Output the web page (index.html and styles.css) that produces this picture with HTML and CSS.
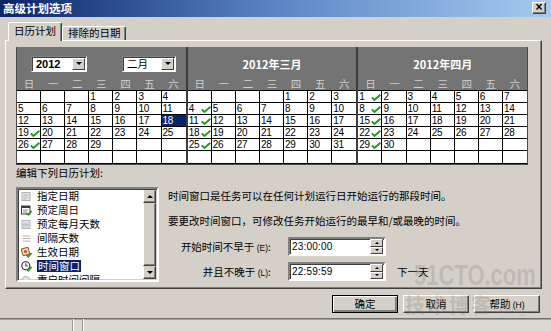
FILE: index.html
```html
<!DOCTYPE html>
<html lang="zh-CN">
<head>
<meta charset="utf-8">
<title>高级计划选项</title>
<link rel="stylesheet" href="styles.css">
</head>
<body>
<div class="window">
  <div class="titlebar">
    <span class="title">高级计划选项</span>
    <span class="close">×</span>
  </div>
  <div class="main">
    <div class="tabs">
      <div class="tab active">日历计划</div>
      <div class="tab">排除的日期</div>
    </div>
    <div class="panel">
      <div class="calendar">
        <div class="month">
          <div class="mhead">
            <div class="mtop first">
              <div class="select year"><span class="sv">2012</span><span class="dd"><i></i></span></div>
              <div class="select mon"><span class="sv">二月</span><span class="dd"><i></i></span></div>
            </div>
            <div class="wk"><span>日</span><span>一</span><span>二</span><span>三</span><span>四</span><span>五</span><span>六</span></div>
          </div>
          <div class="grid">
            <span></span><span></span><span></span><span>1</span><span>2</span><span>3</span><span>4</span>
            <span>5</span><span>6</span><span>7</span><span>8</span><span>9</span><span>10</span><span>11</span>
            <span>12</span><span>13</span><span>14</span><span>15</span><span>16</span><span>17</span><span class="sel">18</span>
            <span>19<svg class="ck" viewBox="0 0 10 7"><path d="M0.8 3.4 3.4 6 9.4 0.8"/></svg></span><span>20</span><span>21</span><span>22</span><span>23</span><span>24</span><span>25</span>
            <span>26<svg class="ck" viewBox="0 0 10 7"><path d="M0.8 3.4 3.4 6 9.4 0.8"/></svg></span><span>27</span><span>28</span><span>29</span><span></span><span></span><span></span>
            <span></span><span></span><span></span><span></span><span></span><span></span><span></span>
          </div>
        </div>
        <div class="month">
          <div class="mhead">
            <div class="mtop">2012年三月</div>
            <div class="wk"><span>日</span><span>一</span><span>二</span><span>三</span><span>四</span><span>五</span><span>六</span></div>
          </div>
          <div class="grid">
            <span></span><span></span><span></span><span></span><span>1</span><span>2</span><span>3</span>
            <span>4<svg class="ck" viewBox="0 0 10 7"><path d="M0.8 3.4 3.4 6 9.4 0.8"/></svg></span><span>5</span><span>6</span><span>7</span><span>8</span><span>9</span><span>10</span>
            <span>11<svg class="ck" viewBox="0 0 10 7"><path d="M0.8 3.4 3.4 6 9.4 0.8"/></svg></span><span>12</span><span>13</span><span>14</span><span>15</span><span>16</span><span>17</span>
            <span>18<svg class="ck" viewBox="0 0 10 7"><path d="M0.8 3.4 3.4 6 9.4 0.8"/></svg></span><span>19</span><span>20</span><span>21</span><span>22</span><span>23</span><span>24</span>
            <span>25<svg class="ck" viewBox="0 0 10 7"><path d="M0.8 3.4 3.4 6 9.4 0.8"/></svg></span><span>26</span><span>27</span><span>28</span><span>29</span><span>30</span><span>31</span>
            <span></span><span></span><span></span><span></span><span></span><span></span><span></span>
          </div>
        </div>
        <div class="month">
          <div class="mhead">
            <div class="mtop">2012年四月</div>
            <div class="wk"><span>日</span><span>一</span><span>二</span><span>三</span><span>四</span><span>五</span><span>六</span></div>
          </div>
          <div class="grid">
            <span>1<svg class="ck" viewBox="0 0 10 7"><path d="M0.8 3.4 3.4 6 9.4 0.8"/></svg></span><span>2</span><span>3</span><span>4</span><span>5</span><span>6</span><span>7</span>
            <span>8<svg class="ck" viewBox="0 0 10 7"><path d="M0.8 3.4 3.4 6 9.4 0.8"/></svg></span><span>9</span><span>10</span><span>11</span><span>12</span><span>13</span><span>14</span>
            <span>15<svg class="ck" viewBox="0 0 10 7"><path d="M0.8 3.4 3.4 6 9.4 0.8"/></svg></span><span>16</span><span>17</span><span>18</span><span>19</span><span>20</span><span>21</span>
            <span>22<svg class="ck" viewBox="0 0 10 7"><path d="M0.8 3.4 3.4 6 9.4 0.8"/></svg></span><span>23</span><span>24</span><span>25</span><span>26</span><span>27</span><span>28</span>
            <span>29<svg class="ck" viewBox="0 0 10 7"><path d="M0.8 3.4 3.4 6 9.4 0.8"/></svg></span><span>30</span><span></span><span></span><span></span><span></span><span></span>
            <span></span><span></span><span></span><span></span><span></span><span></span><span></span>
          </div>
        </div>
      </div>

      <div class="lower">
        <div class="left">
          <div class="label">编辑下列日历计划:</div>
          <div class="list">
            <div class="items">
              <div class="item">
                <svg class="ico" viewBox="0 0 11 11"><rect x="1" y="1.5" width="8" height="8" fill="#e6e4e0" stroke="#b4b2ae"/><path d="M2.5 4h5M2.5 6h5M2.5 8h3" stroke="#c0beba"/></svg>
                <span>指定日期</span>
              </div>
              <div class="item">
                <svg class="ico" viewBox="0 0 11 11"><rect x="0.5" y="1" width="8.5" height="8" fill="#fff" stroke="#3c3c3c"/><rect x="0.5" y="1" width="8.5" height="2" fill="#3c3c3c"/><path d="M2 5h5M2 7h4" stroke="#888"/><path d="M5.5 8 7.3 9.8 10.6 6" stroke="#1a9a1a" stroke-width="1.6" fill="none"/></svg>
                <span>预定周日</span>
              </div>
              <div class="item">
                <svg class="ico" viewBox="0 0 11 11"><rect x="1" y="1.5" width="8" height="8" fill="#e4e6ea" stroke="#aeb4bc"/><path d="M3 3.5v5M5 3.5v5M7 3.5v5M2 5.5h6" stroke="#b8c0c8"/></svg>
                <span>预定每月天数</span>
              </div>
              <div class="item">
                <svg class="ico" viewBox="0 0 11 11"><path d="M1.5 3h8M1.5 5.5h8M1.5 8h8" stroke="#b8b6b2" stroke-width="1.2"/></svg>
                <span>间隔天数</span>
              </div>
              <div class="item">
                <svg class="ico" viewBox="0 0 11 11"><rect x="1" y="1" width="7" height="7" rx="1" fill="#f4e2a0" stroke="#7a5a30" transform="rotate(-15 4.5 4.5)"/><circle cx="4.5" cy="4.5" r="1.6" fill="#d04a4a"/><path d="M5.5 8 7.3 9.8 10.6 6" stroke="#1a9a1a" stroke-width="1.6" fill="none"/></svg>
                <span>生效日期</span>
              </div>
              <div class="item">
                <svg class="ico" viewBox="0 0 11 11"><circle cx="4.8" cy="4.8" r="4" fill="#fff" stroke="#2a2a2a" stroke-width="1.1"/><path d="M4.8 2.3v2.6h2" stroke="#2a2a2a" fill="none"/><path d="M5.5 8 7.3 9.8 10.6 6" stroke="#1a9a1a" stroke-width="1.6" fill="none"/></svg>
                <span class="hl">时间窗口</span>
              </div>
              <div class="item">
                <svg class="ico" viewBox="0 0 11 11"><circle cx="5" cy="5" r="3.5" fill="#e8e6e2" stroke="#b0aeaa"/></svg>
                <span>重启时间间隔</span>
              </div>
            </div>
            <div class="scroll">
              <div class="sbtn"><i class="up"></i></div>
              <div class="thumb"></div>
              <div class="sbtn"><i class="down"></i></div>
            </div>
          </div>
        </div>
        <div class="right">
          <p class="line">时间窗口是任务可以在任何计划运行日开始运行的那段时间。</p>
          <p class="line two">要更改时间窗口，可修改任务开始运行的最早和/或最晚的时间。</p>
          <div class="row r1">
            <span class="flabel">开始时间不早于 <small>(E)</small>:</span>
            <div class="spin"><span class="val">23:00:00</span><span class="arrows"><span class="ab"><i class="up"></i></span><span class="ab"><i class="down"></i></span></span></div>
          </div>
          <div class="row r2">
            <span class="flabel">并且不晚于 <small>(L)</small>:</span>
            <div class="spin"><span class="val">22:59:59</span><span class="arrows"><span class="ab"><i class="up"></i></span><span class="ab"><i class="down"></i></span></span></div>
            <span class="next">下一天</span>
          </div>
        </div>
      </div>
    </div>
    <div class="buttons">
      <div class="btn default">确定</div>
      <div class="btn">取消</div>
      <div class="btn">帮助 <small>(H)</small></div>
    </div>
  </div>
  <div class="bottom">
    <span class="seg"></span><span class="seg"></span>
  </div>
  <div class="watermark">
    <div class="wm1">51CTO.com</div>
    <div class="wm2">技术博客 <span>Blog</span></div>
  </div>
</div>
</body>
</html>
```

FILE: styles.css
```css
* { box-sizing: border-box; }

body {
  margin: 0;
  background: #d4d0c8;
  font-family: "Noto Sans CJK SC", "Liberation Sans", sans-serif;
  font-size: 10.5px;
  color: #000;
}

.window {
  width: 551px;
  height: 331px;
  overflow: hidden;
  background: #d4d0c8;
  position: relative;
}

/* title bar */
.titlebar {
  height: 17px;
  display: flex;
  align-items: center;
  justify-content: space-between;
  padding: 0 5px 0 3px;
  background: linear-gradient(to right, #0a246a 0%, #5a86c4 50%, #a6caf0 100%);
}
.title {
  color: #fff;
  font-weight: bold;
  font-size: 11.5px;
  line-height: 17px;
}
.close {
  width: 14px;
  height: 12px;
  margin-top: -2px;
  background: #d4d0c8;
  border: 1px solid;
  border-color: #fff #404040 #404040 #fff;
  box-shadow: inset -1px -1px #808080;
  font-family: "Liberation Sans", sans-serif;
  font-weight: bold;
  font-size: 12px;
  line-height: 9px;
  text-align: center;
}

/* main area */
.main {
  height: 301px;
  padding: 5px 0 0 5px;
}

.tabs {
  display: flex;
  align-items: flex-end;
  height: 18px;
  padding-left: 3px;
}
.tab {
  height: 14px;
  padding: 0 4px 0 5px;
  border: 1px solid;
  border-color: #fff #404040 transparent #fff;
  border-bottom: none;
  border-radius: 2px 2px 0 0;
  box-shadow: inset -1px 0 #808080;
  line-height: 12px;
  white-space: nowrap;
}
.tab.active {
  height: 19px;
  margin-bottom: -1px;
  padding: 0 5px;
  line-height: 15px;
  background: #d4d0c8;
  position: relative;
  z-index: 1;
}

.panel {
  width: 537px;
  height: 249px;
  border: 1px solid;
  border-color: #fff #404040 #404040 #fff;
  box-shadow: inset -1px -1px #808080;
  padding: 6px 0 0 10px;
}

/* calendar */
.calendar {
  width: 512px;
  height: 118px;
  display: flex;
  gap: 2px;
  background: #3c3c3c;
  border: 1px solid #4a4a4a;
  border-top: none;
}
.month {
  flex: 1;
  display: flex;
  flex-direction: column;
}
.mhead {
  background: #747474;
  height: 43px;
}
.mtop {
  height: 31px;
  display: flex;
  align-items: center;
  justify-content: center;
  padding-top: 2px;
  color: #fff;
  font-weight: bold;
  font-size: 11px;
}
.mtop.first {
  justify-content: flex-start;
  padding-left: 14px;
  gap: 35px;
}
.select {
  height: 16px;
  background: #fff;
  border: 1px solid;
  border-color: #808080 #fff #fff #808080;
  box-shadow: inset 1px 1px #404040;
  display: flex;
  align-items: center;
  justify-content: space-between;
  padding: 1px 1px 1px 4px;
  color: #000;
}
.select.year { width: 56px; }
.select.mon { width: 54px; }
.select .sv {
  font-family: "Liberation Sans", "Noto Sans CJK SC", sans-serif;
  font-size: 11px;
  line-height: 12px;
}
.select.year .sv { font-weight: bold; }
.select.mon .sv { font-weight: normal; font-family: "Noto Sans CJK SC", sans-serif; font-size: 10.5px; }
.dd {
  width: 13px;
  height: 12px;
  background: #d4d0c8;
  border: 1px solid;
  border-color: #fff #404040 #404040 #fff;
  display: flex;
  align-items: center;
  justify-content: center;
}
.dd i, .down {
  display: block;
  width: 0;
  height: 0;
  border-left: 3px solid transparent;
  border-right: 3px solid transparent;
  border-top: 3px solid #000;
}
.up {
  display: block;
  width: 0;
  height: 0;
  border-left: 3px solid transparent;
  border-right: 3px solid transparent;
  border-bottom: 3px solid #000;
}

.wk {
  height: 12px;
  display: grid;
  grid-template-columns: repeat(7, 1fr);
  color: #d0d0d0;
  font-size: 10.5px;
  line-height: 11px;
  text-align: center;
}

.grid {
  flex: 1;
  display: grid;
  grid-template-columns: repeat(7, 1fr);
  grid-template-rows: repeat(5, 12px) 1fr;
  background: #fff;
  border-top: 1px solid #000;
}
.grid > span {
  border-right: 1px solid #000;
  border-bottom: 1px solid #000;
  display: flex;
  align-items: flex-start;
  padding-left: 1px;
  font-family: "Liberation Sans", sans-serif;
  font-size: 10px;
  line-height: 11px;
  letter-spacing: -0.3px;
}
.grid > span:nth-child(7n) { border-right: none; }
.grid > span.sel {
  background: #0a246a;
  color: #fff;
}
.ck {
  width: 10px;
  height: 7px;
  margin-left: auto;
  margin-top: 3px;
  fill: none;
  stroke: #1e9a1e;
  stroke-width: 1.9;
}

/* lower part */
.lower {
  display: flex;
  margin-top: 2px;
}
.left { width: 144px; }
.label {
  height: 20px;
  line-height: 12px;
}
.list {
  width: 143px;
  height: 95px;
  background: #fff;
  border: 2px solid;
  border-color: #808080 #fff #fff #808080;
  box-shadow: inset 1px 1px #404040, inset -1px -1px #d4d0c8;
  display: flex;
}
.items {
  flex: 1;
  overflow: hidden;
}
.item {
  height: 14px;
  display: flex;
  align-items: center;
  gap: 5px;
  padding-left: 3px;
  white-space: nowrap;
  line-height: 12px;
}
.ico {
  width: 11px;
  height: 11px;
  flex: none;
}
.hl {
  background: #0a246a;
  color: #fff;
  padding: 0 1px;
}
.scroll {
  width: 13px;
  display: flex;
  flex-direction: column;
  background: #e8e6e1;
  margin: 1px 1px 1px 0;
}
.sbtn {
  height: 13px;
  background: #d4d0c8;
  border: 1px solid;
  border-color: #d4d0c8 #404040 #404040 #fff;
  box-shadow: inset -1px -1px #808080;
  display: flex;
  align-items: center;
  justify-content: center;
}
.thumb {
  flex: 1;
  background: #d4d0c8;
  border: 1px solid;
  border-color: #d4d0c8 #404040 #404040 #fff;
  box-shadow: inset -1px -1px #808080;
}

.right {
  margin-left: 8px;
  padding-top: 23px;
}
.line {
  margin: 0;
  line-height: 12px;
  white-space: nowrap;
}
.line.two { margin-top: 13px; }
.row {
  display: flex;
  align-items: center;
  height: 19px;
}
.row.r1 { margin-top: 10px; }
.row.r2 { margin-top: 6px; }
.flabel {
  width: 120px;
  padding-right: 17px;
  text-align: right;
  white-space: nowrap;
}
small {
  font-family: "Liberation Sans", sans-serif;
  font-size: 8.5px;
}
.spin {
  width: 98px;
  height: 19px;
  background: #fff;
  border: 2px solid;
  border-color: #808080 #fff #fff #808080;
  box-shadow: inset 1px 1px #404040;
  display: flex;
  align-items: center;
  justify-content: space-between;
  padding: 1px 1px 1px 2px;
}
.val {
  font-family: "Liberation Sans", sans-serif;
  font-size: 10px;
  letter-spacing: 0.2px;
}
.arrows {
  width: 13px;
  height: 15px;
  display: flex;
  flex-direction: column;
}
.ab {
  flex: 1;
  background: #d4d0c8;
  border: 1px solid;
  border-color: #fff #404040 #404040 #fff;
  display: flex;
  align-items: center;
  justify-content: center;
}
.ab .up, .ab .down {
  border-left-width: 2px;
  border-right-width: 2px;
  border-top-width: 2px;
  border-bottom-width: 2px;
}
.next {
  margin-left: 11px;
}

/* buttons */
.buttons {
  display: flex;
  justify-content: flex-end;
  gap: 5px;
  padding: 6px 11px 0 0;
}
.btn {
  width: 66px;
  height: 18px;
  background: #d4d0c8;
  border: 1px solid;
  border-color: #fff #404040 #404040 #fff;
  box-shadow: inset -1px -1px #808080;
  text-align: center;
  line-height: 15px;
}
.btn.default {
  border: 1px solid #000;
  box-shadow: inset 1px 1px #fff, inset -2px -2px #808080;
}

/* bottom strip */
.bottom {
  height: 13px;
  border-top: 1px solid #707070;
  box-shadow: inset 0 1px #a0a0a0;
  background: #dcd9d2;
  display: flex;
  padding-left: 72px;
  gap: 8px;
}
.seg {
  width: 2px;
  border-left: 1px solid #9a9893;
  border-right: 1px solid #fff;
}

/* watermark overlay */
.watermark {
  position: absolute;
  left: 414px;
  top: 262px;
  width: 137px;
  color: rgba(110, 110, 110, 0.22);
  pointer-events: none;
  font-weight: bold;
  white-space: nowrap;
}
.wm1 {
  font-family: "Liberation Sans", sans-serif;
  font-size: 22px;
  line-height: 22px;
  height: 30px;
  transform: scaleY(1.3);
  transform-origin: top left;
}
.wm2 {
  margin-left: -9px;
  font-size: 20px;
  line-height: 26px;
  letter-spacing: 2px;
}
.wm2 span {
  font-family: "Liberation Sans", sans-serif;
  font-size: 13px;
  font-weight: normal;
  letter-spacing: 0;
}
```
